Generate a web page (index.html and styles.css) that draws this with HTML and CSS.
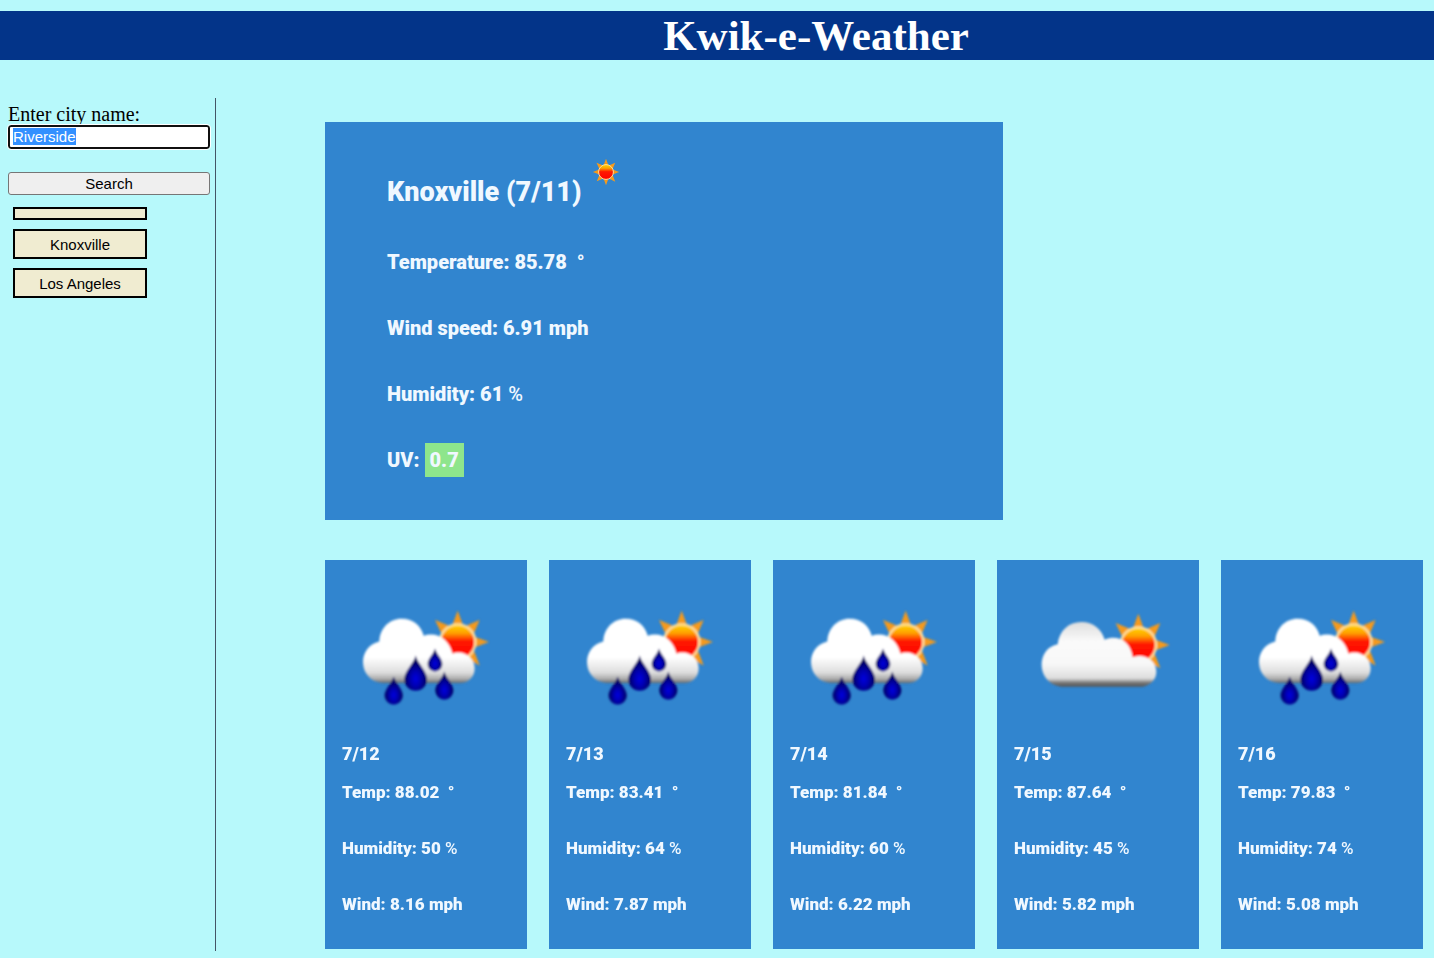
FILE: index.html
```html
<!DOCTYPE html>
<html lang="en">
<head>
<meta charset="utf-8">
<title>Kwik-e-Weather</title>
<link rel="stylesheet" href="styles.css">
</head>
<body>
<svg class="defs" width="0" height="0" aria-hidden="true">
  <defs>
    <filter id="soft"><feGaussianBlur stdDeviation="3"/></filter>
    <linearGradient id="sunFill" x1="0" y1="0" x2="0" y2="1">
      <stop offset="0" stop-color="#ffd800"/><stop offset=".25" stop-color="#ffa000"/><stop offset=".48" stop-color="#ff1800"/><stop offset="1" stop-color="#f00"/>
    </linearGradient>
    <linearGradient id="rainCloud" gradientUnits="userSpaceOnUse" x1="0" y1="86" x2="0" y2="279">
      <stop offset="0" stop-color="#fff"/><stop offset=".6" stop-color="#fff"/><stop offset=".84" stop-color="#ddd"/><stop offset=".94" stop-color="#aaa"/><stop offset="1" stop-color="#666"/>
    </linearGradient>
    <linearGradient id="plainCloud" gradientUnits="userSpaceOnUse" x1="0" y1="96" x2="0" y2="290">
      <stop offset="0" stop-color="#ddd"/><stop offset=".3" stop-color="#fafafa"/><stop offset=".65" stop-color="#f8f8f8"/><stop offset=".87" stop-color="#ddd"/><stop offset=".94" stop-color="#777"/><stop offset="1" stop-color="#555"/>
    </linearGradient>
    <radialGradient id="dropFill" cx=".5" cy=".66" r=".5">
      <stop offset="0" stop-color="#0000e0"/><stop offset=".45" stop-color="#0000b0"/><stop offset="1" stop-color="#00005c"/>
    </radialGradient>
    <g id="sun">
      <path fill="#f59a1b" d="M0-94 17-48-17-48ZM66-66 48-24 24-48ZM94 0 48 17 48-17ZM66 70 24 48 48 24ZM0 94-17 48 17 48ZM-66 66-48 24-24 48ZM-94 0-48-17-48 17ZM-68-66-24-48-48-24Z"/>
      <circle r="53" fill="url(#sunFill)" stroke="#ffe0a0" stroke-width="7"/>
    </g>
    <path id="drop" fill="url(#dropFill)" d="M0-54C7-28 34-8 34 17A34 34 0 0 1-34 17C-34-8-7-28 0-54Z"/>
    <symbol id="rain" viewBox="0 0 606 390">
      <g filter="url(#soft)">
        <use href="#sun" x="398" y="156"/>
        <path fill="url(#rainCloud)" d="M172 279C137 276 114 250 114 216 114 185 134 161 163 154 165 114 193 86 230 86 264 86 289 107 296 137 333 124 372 145 382 190 417 178 449 203 449 235 449 260 432 276 410 279Z"/>
        <use href="#drop" transform="translate(272 251)"/>
        <use href="#drop" transform="translate(330 211) scale(.65)"/>
        <use href="#drop" transform="translate(206 303) scale(.8)"/>
        <use href="#drop" transform="translate(358 288) scale(.8)"/>
      </g>
    </symbol>
    <symbol id="cloudy" viewBox="0 0 606 390">
      <g filter="url(#soft)">
        <use href="#sun" x="424" y="165"/>
        <path fill="url(#plainCloud)" d="M192 290C156 286 134 256 134 224 134 192 154 168 182 163 187 121 216 96 253 96 289 96 314 118 323 149 360 132 401 152 407 202 443 188 478 212 478 245 478 270 459 286 437 290Z"/>
      </g>
    </symbol>
  </defs>
</svg>

<header class="banner"><h1>Kwik-e-Weather</h1></header>
<div class="layout">
  <aside class="sidebar">
    <form class="search">
      <label for="city">Enter city name:</label>
      <input id="city" type="text" value="Riverside" autofocus>
      <button type="button">Search</button>
    </form>
    <div class="history">
      <button type="button" aria-label="Empty entry"></button>
      <button type="button">Knoxville</button>
      <button type="button">Los Angeles</button>
    </div>
  </aside>
  <main class="weather">
    <section class="current">
      <div class="place">
        <h2>Knoxville (7/11)</h2>
        <svg class="sun" viewBox="-100 -100 200 200" role="img" aria-label="Sunny"><use href="#sun"/></svg>
      </div>
      <p>Temperature: 85.78 &nbsp;°</p>
      <p>Wind speed: 6.91 mph</p>
      <p>Humidity: 61 <span class="unit">%</span></p>
      <p>UV: <span class="uv">0.7</span></p>
    </section>
    <section class="forecast">
      <article class="day"><svg role="img" aria-label="Rain"><use href="#rain"/></svg><h3>7/12</h3><p>Temp: 88.02 &nbsp;°</p><p>Humidity: 50 <span class="unit">%</span></p><p>Wind: 8.16 mph</p></article>
      <article class="day"><svg role="img" aria-label="Rain"><use href="#rain"/></svg><h3>7/13</h3><p>Temp: 83.41 &nbsp;°</p><p>Humidity: 64 <span class="unit">%</span></p><p>Wind: 7.87 mph</p></article>
      <article class="day"><svg role="img" aria-label="Rain"><use href="#rain"/></svg><h3>7/14</h3><p>Temp: 81.84 &nbsp;°</p><p>Humidity: 60 <span class="unit">%</span></p><p>Wind: 6.22 mph</p></article>
      <article class="day"><svg role="img" aria-label="Partly cloudy"><use href="#cloudy"/></svg><h3>7/15</h3><p>Temp: 87.64 &nbsp;°</p><p>Humidity: 45 <span class="unit">%</span></p><p>Wind: 5.82 mph</p></article>
      <article class="day"><svg role="img" aria-label="Rain"><use href="#rain"/></svg><h3>7/16</h3><p>Temp: 79.83 &nbsp;°</p><p>Humidity: 74 <span class="unit">%</span></p><p>Wind: 5.08 mph</p></article>
    </section>
  </main>
</div>
<script src="app.js"></script>
</body>
</html>
```
FILE: styles.css
```css
* { box-sizing: border-box; }
body {
  margin: 0;
  padding-top: 11px;
  background: #b7f9fb;
  font-family: "Liberation Serif", serif;
}
h1, h2, h3, p { margin: 0; }
.defs { position: absolute; }
.banner {
  padding-left: 198px;
  background: #033489;
  color: #fff;
  text-align: center;
}
h1 { font-size: 43px; line-height: 49px; }
.layout { display: flex; align-items: flex-start; padding-top: 38px; }
.sidebar {
  flex: 0 0 216px;
  min-width: 0;
  min-height: calc(100vh - 105px);
  padding: 5px 5px 0 8px;
  border-right: 1px solid #456;
}
.search { display: flex; flex-direction: column; }
.search label { font-size: 20px; line-height: 22px; }
input, button { font-family: "Liberation Sans", sans-serif; font-size: 15px; }
.search input {
  width: 100%;
  height: 24px;
  padding: 0 3px 1px;
  border: 2px solid #101010;
  border-radius: 3px;
  outline: 1px solid #fff;
  background: #fff;
}
.search input::selection { background: #3390ff; color: #fff; }
.search button {
  height: 23px;
  margin-top: 23px;
  padding: 0;
  border: 1px solid #767676;
  border-radius: 3px;
  background: #efefef;
}
.history {
  display: flex;
  flex-direction: column;
  gap: 9px;
  width: 134px;
  margin: 12px 0 0 5px;
}
.history button {
  padding: 5px 4px 3px;
  border: 2px solid #000;
  background: #f0ecd1;
  line-height: 18px;
}
.history button:empty { height: 13px; }
.weather {
  flex: 1;
  min-width: 0;
  padding: 24px 11px 9px 109px;
  color: #f0f8ff;
  font-family: Roboto, sans-serif;
  font-weight: 900;
}
.current {
  width: 61.75%;
  padding: 36px 62px 48px;
  background: #3185cf;
  font-size: 20px;
  line-height: 24px;
}
.place { display: flex; gap: 11px; }
.place h2 { padding-top: 19px; font-size: 27px; line-height: 30px; font-weight: inherit; }
.sun { width: 28px; height: 28px; }
.current p { margin-top: 42px; }
.current .place + p { margin-top: 43px; }
.uv { padding: 5px; background: #8ee58c; }
.unit { font-weight: 500; }
.forecast {
  display: grid;
  grid-template-columns: repeat(5, 1fr);
  gap: 22px;
  margin-top: 40px;
}
.day {
  padding: 30px 0 35px;
  background: #3185cf;
  font-size: 17px;
  line-height: 20px;
}
.day svg { display: block; width: 100%; height: 130px; }
.day h3 { margin: 24px 17px 18px; font-size: 18px; font-weight: inherit; }
.day p { padding-left: 17px; }
.day p + p { margin-top: 36px; }
```
FILE: app.js
```js
const city = document.getElementById("city");
city.focus();
city.select();
```
